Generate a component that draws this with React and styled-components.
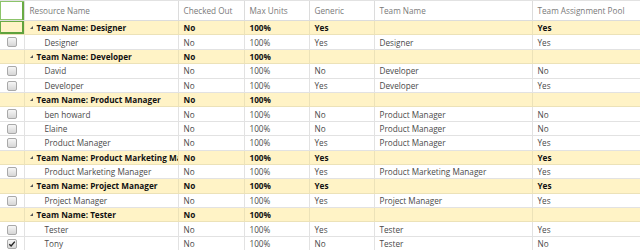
import React from "react";
import styled, { createGlobalStyle, css } from "styled-components";

const Global = createGlobalStyle`
  html, body { margin: 0; padding: 0; background: #fff; overflow: hidden; }
  body { font-family: "Open Sans", "Noto Sans", sans-serif; }
`;

const Grid = styled.table`
  border-collapse: collapse;
  table-layout: fixed;
  width: 660px;
  font-size: 8.2px;
  color: #4a4a4a;
`;

const HeadRow = styled.tr`
  height: 20px;
`;

const Th = styled.th`
  font-weight: normal;
  text-align: left;
  color: #7a7a7a;
  padding: 0 5px;
  border-top: 1px solid #e2e2e2;
  border-bottom: 1px solid #dcdcdc;
  border-left: 1px solid #dcdcdc;
  white-space: nowrap;
  overflow: hidden;
  vertical-align: middle;
  line-height: 12px;
  ${(p) =>
    p.$selected &&
    css`
      box-shadow: inset 1px 1px 0 #8cc46a, inset -2px 0 0 #6aab44, inset 0 -1px 0 #8cc46a;
      border-left: none;
    `}
`;

const Row = styled.tr`
  height: 14.4px;
  background: ${(p) => (p.$group ? "#fff3c6" : "#fff")};
`;

const Td = styled.td`
  padding: 0 5px;
  height: 13px;
  box-sizing: border-box;
  border-bottom: 1px solid ${(p) => (p.$group ? "#ece2b8" : "#e2e2e2")};
  border-left: 1px solid ${(p) => (p.$group ? "#ece2b8" : "#e2e2e2")};
  white-space: nowrap;
  overflow: hidden;
  vertical-align: middle;
  line-height: 11px;
  font-weight: ${(p) => (p.$group ? 700 : 400)};
  color: ${(p) => (p.$group ? "#111" : "#4a4a4a")};
  ${(p) => p.$indent && css`padding-left: 20px;`}
`;

const SelectCell = styled.td`
  padding: 0;
  height: 13px;
  box-sizing: border-box;
  line-height: 10px;
  border-bottom: 1px solid ${(p) => (p.$group ? "#ece2b8" : "#e2e2e2")};
  text-align: center;
  vertical-align: middle;
  ${(p) =>
    p.$selected &&
    css`
      box-shadow: inset 1px 0 0 #6aab44, inset -2px 0 0 #5fa23c, inset 0 -2px 0 #5fa23c, inset 0 1px 0 #6aab44;
    `}
`;

const Box = styled.span`
  display: inline-block;
  box-sizing: border-box;
  width: 10px;
  height: 10px;
  border: 1px solid #a9a9a9;
  border-radius: 2px;
  background: linear-gradient(#f6f6f6, #d6d6d6);
  vertical-align: middle;
  position: relative;
  svg { position: absolute; left: 0px; top: 0px; }
`;

const GroupLabel = styled.div`
  display: flex;
  align-items: center;
  gap: 4px;
  white-space: nowrap;
`;

const Tri = () => (
  <svg width="3" height="3" viewBox="0 0 3 3" style={{ flex: "none" }}>
    <polygon points="3,0 3,3 0,3" fill="#555" />
  </svg>
);

const Check = () => (
  <svg width="8" height="8" viewBox="0 0 8 8">
    <path d="M1.3 4.2 L3.1 6 L6.8 1.6" stroke="#222" strokeWidth="1.4" fill="none" />
  </svg>
);

const rows = [
  { g: true, name: "Team Name: Designer", co: "No", mu: "100%", gen: "Yes", team: "", pool: "Yes", sel: true },
  { name: "Designer", co: "No", mu: "100%", gen: "Yes", team: "Designer", pool: "Yes" },
  { g: true, name: "Team Name: Developer", co: "No", mu: "100%", gen: "", team: "", pool: "" },
  { name: "David", co: "No", mu: "100%", gen: "No", team: "Developer", pool: "No" },
  { name: "Developer", co: "No", mu: "100%", gen: "Yes", team: "Developer", pool: "Yes" },
  { g: true, name: "Team Name: Product Manager", co: "No", mu: "100%", gen: "", team: "", pool: "" },
  { name: "ben howard", co: "No", mu: "100%", gen: "No", team: "Product Manager", pool: "No" },
  { name: "Elaine", co: "No", mu: "100%", gen: "No", team: "Product Manager", pool: "No" },
  { name: "Product Manager", co: "No", mu: "100%", gen: "Yes", team: "Product Manager", pool: "Yes" },
  { g: true, name: "Team Name: Product Marketing Manager", co: "No", mu: "100%", gen: "Yes", team: "", pool: "Yes" },
  { name: "Product Marketing Manager", co: "No", mu: "100%", gen: "Yes", team: "Product Marketing Manager", pool: "Yes" },
  { g: true, name: "Team Name: Project Manager", co: "No", mu: "100%", gen: "Yes", team: "", pool: "Yes" },
  { name: "Project Manager", co: "No", mu: "100%", gen: "Yes", team: "Project Manager", pool: "Yes" },
  { g: true, name: "Team Name: Tester", co: "No", mu: "100%", gen: "", team: "", pool: "" },
  { name: "Tester", co: "No", mu: "100%", gen: "Yes", team: "Tester", pool: "Yes" },
  { name: "Tony", co: "No", mu: "100%", gen: "No", team: "Tester", pool: "No", checked: true },
];

export default function App() {
  return (
    <>
      <Global />
      <Grid>
        <colgroup>
          <col style={{ width: 24 }} />
          <col style={{ width: 154 }} />
          <col style={{ width: 66 }} />
          <col style={{ width: 65 }} />
          <col style={{ width: 65 }} />
          <col style={{ width: 158 }} />
          <col style={{ width: 128 }} />
        </colgroup>
        <thead>
          <HeadRow>
            <Th $selected />
            <Th>Resource Name</Th>
            <Th>Checked Out</Th>
            <Th>Max Units</Th>
            <Th>Generic</Th>
            <Th>Team Name</Th>
            <Th>Team Assignment Pool</Th>
          </HeadRow>
        </thead>
        <tbody>
          {rows.map((r, i) => (
            <Row key={i} $group={r.g}>
              <SelectCell $group={r.g} $selected={r.sel}>
                {!r.g && <Box>{r.checked && <Check />}</Box>}
              </SelectCell>
              <Td $group={r.g} $indent={!r.g}>
                {r.g ? (
                  <GroupLabel>
                    <Tri />
                    <span>{r.name}</span>
                  </GroupLabel>
                ) : (
                  r.name
                )}
              </Td>
              <Td $group={r.g}>{r.co}</Td>
              <Td $group={r.g}>{r.mu}</Td>
              <Td $group={r.g}>{r.gen}</Td>
              <Td $group={r.g}>{r.team}</Td>
              <Td $group={r.g}>{r.pool}</Td>
            </Row>
          ))}
        </tbody>
      </Grid>
    </>
  );
}
